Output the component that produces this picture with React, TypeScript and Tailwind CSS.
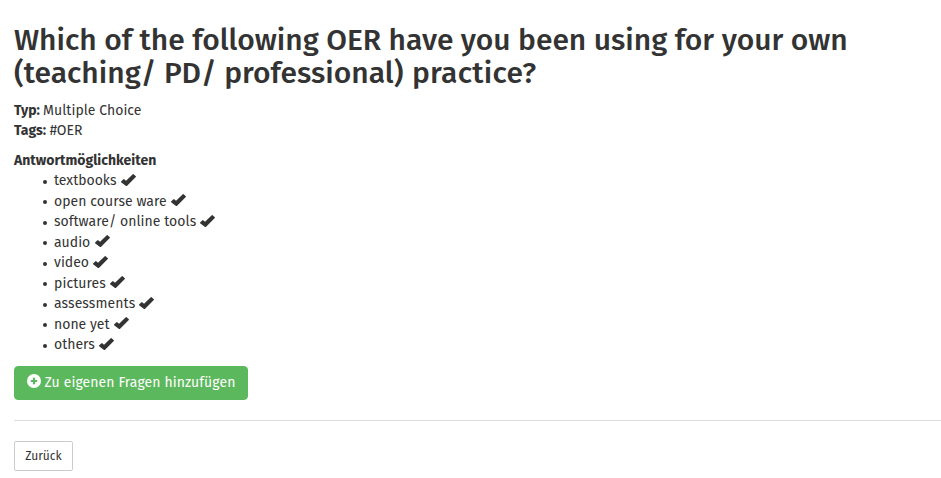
const answers = [
  { text: "textbooks", cls: "w-[63px]" },
  { text: "open course ware", cls: "w-[113px] tracking-[0.05px]" },
  { text: "software/ online tools", cls: "w-[142px] tracking-[0.04px]" },
  { text: "audio", cls: "w-[36.5px]" },
  { text: "video", cls: "w-[35px]" },
  { text: "pictures", cls: "w-[52px] tracking-[0.08px]" },
  { text: "assessments", cls: "w-[81px] tracking-[0.08px]" },
  { text: "none yet", cls: "w-[56px]" },
  { text: "others", cls: "w-[41px]" },
];

function Check() {
  return (
    <svg className="-mt-[3px] ml-1 h-[14px] w-[15px] shrink-0" viewBox="0 0 14 14" preserveAspectRatio="none" fill="currentColor">
      <path d="M.1 8.5 2.2 6.3q.4-.3.8 0L4.7 7.7 11 1.2q.4-.4.8 0l2 2.1q.4.4 0 .8L5.5 12.9q-.4.4-.8 0L.1 9.2q-.3-.3 0-.7z" />
    </svg>
  );
}

export default function App() {
  return (
    <main className="h-[478px] overflow-hidden bg-white pl-[14px] pt-[24px] font-['Fira_Sans','Noto_Sans',sans-serif] text-[14px] leading-5 text-[#333]">
      <h2 className="whitespace-nowrap font-['Fira_Sans','Noto_Sans',sans-serif] text-[30px] font-medium leading-[33px]">
        <span className="block tracking-[-0.015px]">Which of the following OER have you been using for your own</span>
        <span className="block">(teaching/ PD/ professional) <span className="ml-px tracking-[0.25px]">practice?</span></span>
      </h2>
      <p className="mt-[11px] whitespace-nowrap">
        <span className="block"><b>Typ:</b> <span className="-ml-[0.6px] tracking-[0.03px]">Multiple Choice</span></span>
        <span className="block"><b>Tags:</b> #OER</span>
      </p>
      <p className="mt-[10px] font-bold">Antwortmöglichkeiten</p>
      <ul className="pl-[29px]">
        {answers.map((a) => (
          <li key={a.text} className="flex h-[20.5px] items-center whitespace-nowrap">
            <span className="mt-px mr-[7px] h-1 w-1 rounded-full bg-[#333]" />
            <span className={a.cls}>{a.text}</span>
            <Check />
          </li>
        ))}
      </ul>
      <button className="mt-[10px] flex h-[34px] w-[234px] items-center rounded-[4px] border border-[#5cb85c] bg-[#5cb85c] pl-3 whitespace-nowrap text-white">
        <svg className="mr-[3.5px] -mt-[4px] h-[14px] w-[14px]" viewBox="0 0 14 14">
          <circle cx="7" cy="7" r="7" fill="#fff" />
          <path d="M7 3.8v6.4M3.8 7h6.4" stroke="#5cb85c" strokeWidth="2.2" />
        </svg>
        <span className="tracking-[0.09px]">Zu eigenen Fragen hinzufügen</span>
      </button>
      <hr className="mt-5 border-[#ddd]" />
      <button className="mt-5 h-[30px] w-[59px] rounded-[2px] border border-[#ccc] text-[12px] leading-[18px]">Zurück</button>
    </main>
  );
}
